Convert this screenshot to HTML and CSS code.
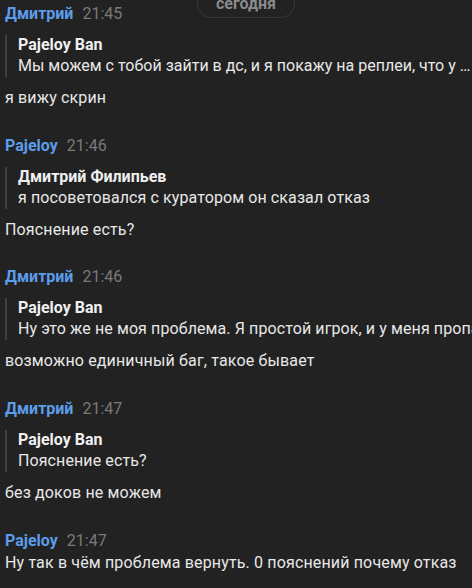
FILE: index.html
```html
<!DOCTYPE html>
<html lang="ru">
<head>
<meta charset="utf-8">
<link rel="stylesheet" href="styles.css">
</head>
<body>
<div class="chat">
  <div class="date-pill">сегодня</div>

  <div class="group">
    <div class="head"><span class="name">Дмитрий</span><span class="time">21:45</span></div>
    <div class="reply">
      <div class="reply-name">Pajeloy Ban</div>
      <div class="reply-text ellip">Мы можем с тобой зайти в дс, и я покажу на реплеи, что у меня всё нормально работает</div>
    </div>
    <div class="text">я вижу скрин</div>
  </div>

  <div class="group">
    <div class="head"><span class="name">Pajeloy</span><span class="time">21:46</span></div>
    <div class="reply">
      <div class="reply-name">Дмитрий Филипьев</div>
      <div class="reply-text">я посоветовался с куратором он сказал отказ</div>
    </div>
    <div class="text">Пояснение есть?</div>
  </div>

  <div class="group">
    <div class="head"><span class="name">Дмитрий</span><span class="time">21:46</span></div>
    <div class="reply">
      <div class="reply-name">Pajeloy Ban</div>
      <div class="reply-text">Ну это же не моя проблема. Я простой игрок, и у меня пропала</div>
    </div>
    <div class="text">возможно единичный баг, такое бывает</div>
  </div>

  <div class="group">
    <div class="head"><span class="name">Дмитрий</span><span class="time">21:47</span></div>
    <div class="reply">
      <div class="reply-name">Pajeloy Ban</div>
      <div class="reply-text">Пояснение есть?</div>
    </div>
    <div class="text">без доков не можем</div>
  </div>

  <div class="group">
    <div class="head"><span class="name">Pajeloy</span><span class="time">21:47</span></div>
    <div class="text">Ну так в чём проблема вернуть. 0 пояснений почему отказ</div>
  </div>
</div>
</body>
</html>
```
FILE: styles.css
```css
html, body {
  margin: 0;
  padding: 0;
  background: #222222;
}
body {
  width: 472px;
  height: 588px;
  overflow: hidden;
  font-family: Roboto, "Noto Sans", sans-serif;
  color: #e8e8e8;
}
.chat {
  position: relative;
  padding: 4px 0 0 5px;
  display: flex;
  flex-direction: column;
  gap: 27px;
}
.date-pill {
  position: absolute;
  top: -14px;
  left: 197px;
  width: 98px;
  height: 32px;
  box-sizing: border-box;
  border: 1px solid #393939;
  border-radius: 14px;
  background: #222222;
  color: #8a8a8a;
  font-weight: 700;
  font-size: 16px;
  display: flex;
  align-items: center;
  justify-content: center;
  line-height: 1;
  padding-top: 3px;
}
.group {
  display: flex;
  flex-direction: column;
}
.group:nth-child(3) {
  margin-bottom: -1px;
}
.head {
  display: flex;
  align-items: baseline;
  gap: 9px;
  height: 20px;
  line-height: 20px;
}
.name {
  color: #5c9cea;
  font-weight: 700;
  font-size: 16px;
}
.time {
  color: #7a7a7a;
  font-size: 16px;
}
.reply {
  margin-top: 11px;
  border-left: 2px solid #404040;
  padding: 0 0 0 11px;
  display: flex;
  flex-direction: column;
}
.reply-name {
  font-weight: 700;
  font-size: 16px;
  line-height: 20px;
  color: #f0f0f0;
}
.reply-text {
  font-size: 16px;
  line-height: 22px;
  letter-spacing: 0.1px;
  white-space: nowrap;
  overflow: hidden;
}
.reply-text.ellip {
  letter-spacing: 0;
  text-overflow: ellipsis;
}
.text {
  margin-top: 10px;
  font-size: 16px;
  line-height: 22px;
  letter-spacing: 0.15px;
  white-space: nowrap;
}
.head + .text {
  margin-top: 1px;
}
```
